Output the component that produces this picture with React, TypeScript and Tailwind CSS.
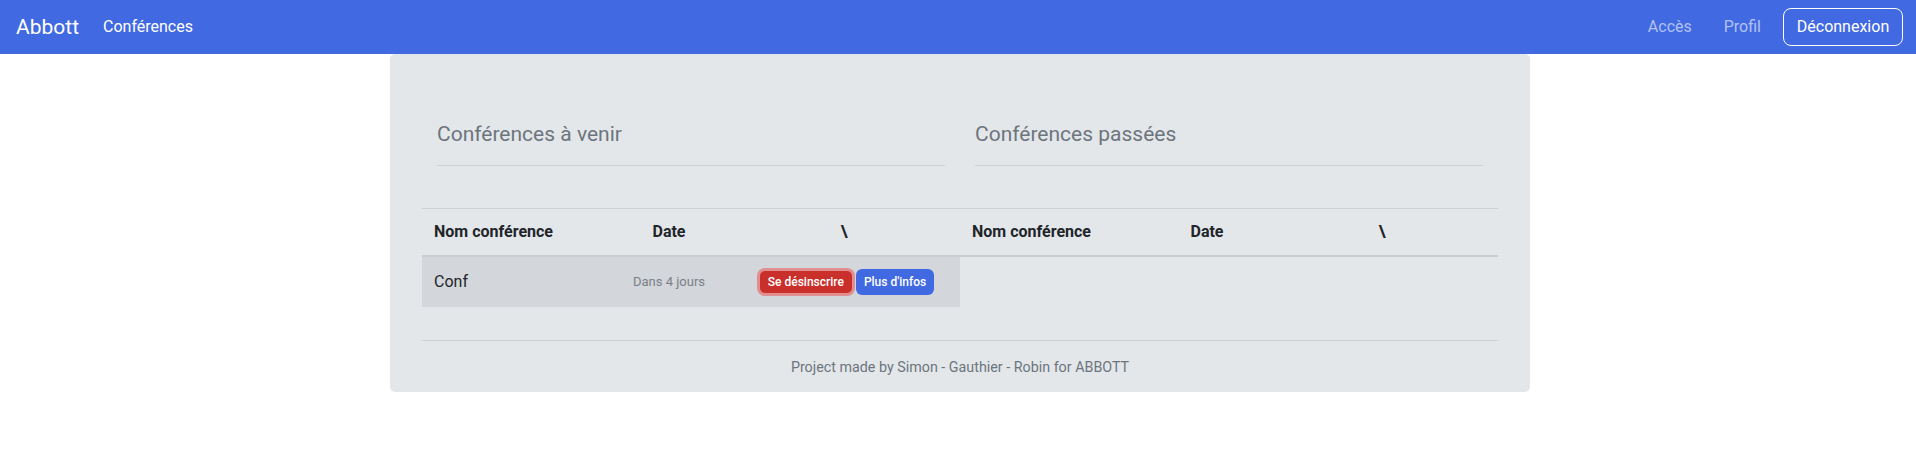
import React from "react";

function HeaderRow() {
  return (
    <div className="grid grid-cols-[188px_118px_1fr] h-[48px] items-center border-b-2 border-[#c9ccd0] text-[16px] font-bold text-[#212529]">
      <div className="pl-[12px]">Nom conférence</div>
      <div className="text-center">Date</div>
      <div className="text-center">\</div>
    </div>
  );
}

export default function App() {
  return (
    <div className="min-h-screen bg-white font-['Roboto','Liberation_Sans',sans-serif]">
      <nav className="h-[54px] bg-[#4169e1] flex items-center pl-[16px] pr-[13px]">
        <span className="text-[21px] text-white leading-none">Abbott</span>
        <a className="ml-[24px] text-[16px] text-white">Conférences</a>
        <div className="ml-auto flex items-center">
          <a className="text-[16px] text-white/60">Accès</a>
          <a className="ml-[32px] text-[16px] text-white/60">Profil</a>
          <button className="ml-[22px] h-[38px] w-[120px] rounded-[8px] border border-white text-[16px] text-white">
            Déconnexion
          </button>
        </div>
      </nav>

      <div className="pl-[4px]">
        <div className="mx-auto w-[1140px] bg-[#e4e7ea] rounded-[5px] px-[32px] pb-[14px]">
          <div className="grid grid-cols-2 pt-[66px]">
            <div className="px-[15px]">
              <h4 className="text-[21px] leading-[29px] text-[#6c757d]">Conférences à venir</h4>
              <div className="mt-[16px] h-px bg-[#cdd0d4]" />
            </div>
            <div className="px-[15px]">
              <h4 className="text-[21px] leading-[29px] text-[#6c757d]">Conférences passées</h4>
              <div className="mt-[16px] h-px bg-[#cdd0d4]" />
            </div>
          </div>

          <div className="mt-[42px] border-t border-[#cfd2d6] flex">
            <div className="w-1/2">
              <HeaderRow />
              <div className="grid grid-cols-[188px_118px_1fr] h-[50px] items-center bg-[#d3d6da]">
                <div className="pl-[12px] text-[16px] text-[#212529]">Conf</div>
                <div className="text-center text-[13px] text-[#7a8087]">Dans 4 jours</div>
                <div className="flex justify-center items-center gap-[4px] pl-[6px]">
                  <button className="h-[22px] px-[8px] rounded-[5px] bg-[#c9302c] text-[12px] font-medium text-white ring-[3px] ring-[#e08e8e]">
                    Se désinscrire
                  </button>
                  <button className="h-[26px] px-[8px] rounded-[6px] bg-[#4169e1] text-[12px] font-medium text-white">
                    Plus d'infos
                  </button>
                </div>
              </div>
            </div>
            <div className="w-1/2">
              <HeaderRow />
            </div>
          </div>

          <div className="mt-[33px] h-px bg-[#cdd0d4]" />
          <p className="mt-[16px] text-center text-[14.3px] leading-[21px] text-[#6c757d]">
            Project made by Simon - Gauthier - Robin for ABBOTT
          </p>
        </div>
      </div>
    </div>
  );
}
